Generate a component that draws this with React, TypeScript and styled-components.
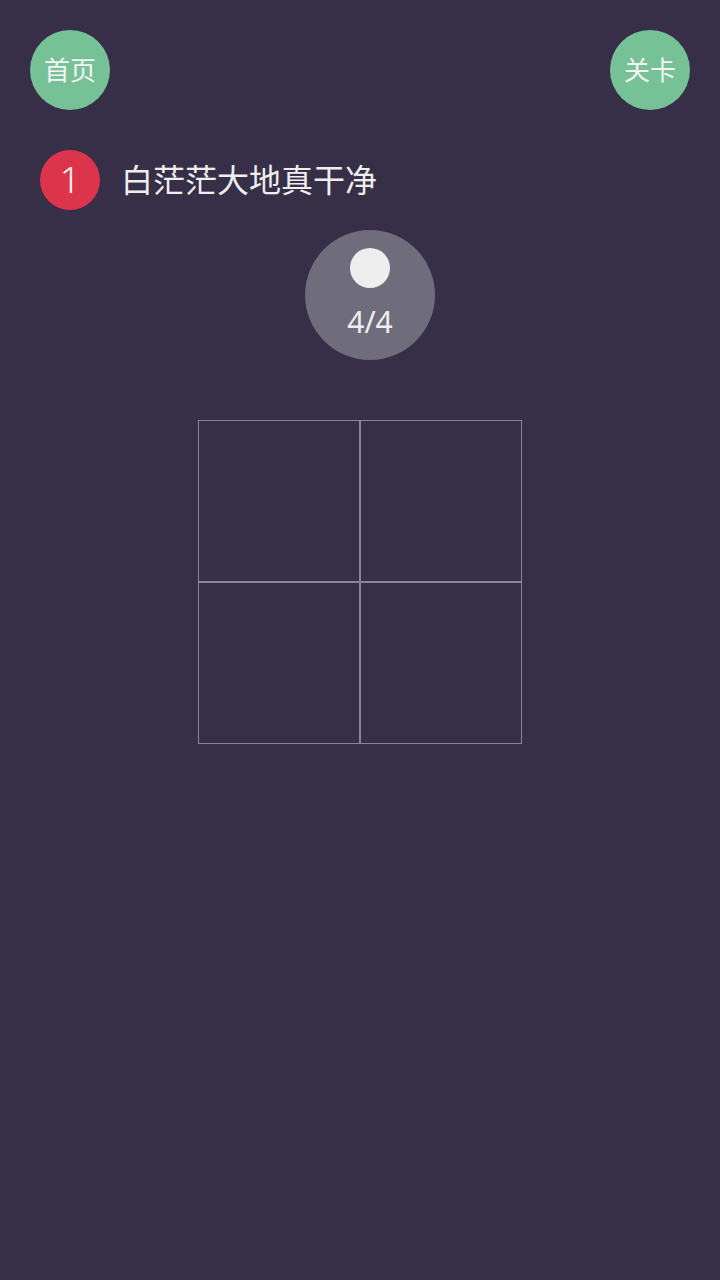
import React from "react";
import styled, { createGlobalStyle } from "styled-components";

const GlobalStyle = createGlobalStyle`
  html, body {
    margin: 0;
    padding: 0;
    background: #372f47;
  }
  body {
    font-family: "Noto Sans", "Noto Sans CJK SC", sans-serif;
  }
`;

const Page = styled.div`
  width: 720px;
  height: 1280px;
  background: #372f47;
  color: #eeeeee;
  padding: 30px 30px 0;
  box-sizing: border-box;
  display: flex;
  flex-direction: column;
`;

const TopBar = styled.div`
  display: flex;
  justify-content: space-between;
  align-items: center;
`;

const RoundButton = styled.button`
  width: 80px;
  height: 80px;
  border-radius: 50%;
  border: none;
  padding: 0 0 4px;
  background: #77c197;
  color: #f4f4f4;
  font-family: "Noto Sans CJK SC", sans-serif;
  font-size: 26px;
  display: flex;
  align-items: center;
  justify-content: center;
`;

const TitleRow = styled.div`
  display: flex;
  align-items: center;
  gap: 21px;
  margin: 40px 0 0 10px;
`;

const LevelBadge = styled.div`
  width: 60px;
  height: 60px;
  border-radius: 50%;
  background: #dc344b;
  color: #f4f4f4;
  font-size: 36px;
  font-weight: 300;
  display: flex;
  align-items: center;
  justify-content: center;
  line-height: 1;
`;

const Title = styled.div`
  font-family: "Noto Sans CJK SC", sans-serif;
  font-size: 32px;
  color: #eeeeee;
  line-height: 1;
  padding-bottom: 4px;
`;

const Counter = styled.div`
  align-self: center;
  width: 130px;
  height: 130px;
  border-radius: 50%;
  background: #6f6c7c;
  margin-top: 20px;
  margin-left: 20px;
  display: flex;
  flex-direction: column;
  align-items: center;
  padding-top: 18px;
  box-sizing: border-box;
`;

const Dot = styled.div`
  width: 40px;
  height: 40px;
  border-radius: 50%;
  background: #eeeeee;
`;

const CountText = styled.div`
  margin-top: 19px;
  font-size: 30px;
  line-height: 1;
  color: #eeeeee;
`;

const Board = styled.div`
  align-self: center;
  margin-top: 60px;
  display: grid;
  grid-template-columns: repeat(2, 162px);
  grid-template-rows: repeat(2, 162px);
`;

const Cell = styled.div`
  border: 1px solid #8a8498;
  box-sizing: border-box;
`;

export default function App() {
  return (
    <>
      <GlobalStyle />
      <Page>
        <TopBar>
          <RoundButton>首页</RoundButton>
          <RoundButton>关卡</RoundButton>
        </TopBar>
        <TitleRow>
          <LevelBadge>1</LevelBadge>
          <Title>白茫茫大地真干净</Title>
        </TitleRow>
        <Counter>
          <Dot />
          <CountText>4/4</CountText>
        </Counter>
        <Board>
          {[0, 1, 2, 3].map((i) => (
            <Cell key={i} />
          ))}
        </Board>
      </Page>
    </>
  );
}
